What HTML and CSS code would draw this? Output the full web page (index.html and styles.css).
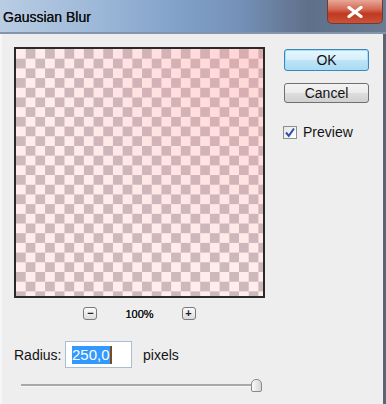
FILE: index.html
```html
<!DOCTYPE html>
<html lang="en">
<head>
    <meta charset="UTF-8">
    <title>Gaussian Blur</title>
    <link rel="stylesheet" href="styles.css">
</head>
<body>
    <div class="window">
        <div class="titlebar">
            <span class="title">Gaussian Blur</span>
            <div class="close-btn">
                <svg width="18" height="12" viewBox="0 0 18 12">
                    <path d="M3 1.5 L15 10.5 M15 1.5 L3 10.5" stroke="#fff" stroke-width="3.2" stroke-linecap="round"/>
                </svg>
            </div>
        </div>

        <div class="content">
            <div class="left-col">
                <div class="preview"></div>

                <div class="zoom-row">
                    <div class="zoom-btn">&minus;</div>
                    <span class="zoom-value">100%</span>
                    <div class="zoom-btn">+</div>
                </div>

                <div class="radius-row">
                    <label class="radius-label">Radius:</label>
                    <div class="radius-input"><span class="selected">250,0</span><span class="caret"></span></div>
                    <span class="unit">pixels</span>
                </div>

                <div class="slider">
                    <div class="track"></div>
                    <div class="thumb"></div>
                </div>
            </div>

            <div class="right-col">
                <button class="btn btn-ok">OK</button>
                <button class="btn btn-cancel">Cancel</button>
                <div class="check-row">
                    <span class="checkbox">
                        <svg width="12" height="11" viewBox="0 0 12 11">
                            <path d="M2 5.5 L4.8 8.8 L10 1.5" fill="none" stroke="#2c4fa8" stroke-width="2"/>
                        </svg>
                    </span>
                    <span class="check-label">Preview</span>
                </div>
            </div>
        </div>
    </div>
</body>
</html>
```

FILE: styles.css
```css
body {
    margin: 0;
    font-family: "Liberation Sans", Arial, sans-serif;
    color: #141414;
    background-color: #eeeeee;
}

.window {
    width: 386px;
    height: 404px;
    display: flex;
    flex-direction: column;
    background-color: #eeeeee;
    box-sizing: border-box;
}

.titlebar {
    height: 34px;
    flex-shrink: 0;
    display: flex;
    justify-content: space-between;
    align-items: flex-start;
    background: linear-gradient(to right, #b9cde3 0%, #9db8d8 25%, #7f9fc8 48%, #7591b8 62%, #5f708a 80%, #6a7b94 100%);
    border-bottom: 2px solid #8595aa;
    box-sizing: border-box;
}

.title {
    font-size: 14px;
    color: #111;
    margin: 9px 0 0 3px;
    text-shadow: 0 0 0.4px #111;
}

.close-btn {
    width: 56px;
    height: 24px;
    margin-right: 3px;
    box-sizing: border-box;
    border: 1px solid #6e3b36;
    border-top: none;
    border-radius: 0 0 5px 5px;
    background: linear-gradient(to bottom, #e8a898 0%, #d46a55 40%, #c0391f 60%, #c9533b 100%);
    display: flex;
    align-items: center;
    justify-content: center;
}

.content {
    flex: 1;
    display: flex;
    gap: 19px;
    padding: 13px 0 0 14px;
    border-right: 3px solid #5c6470;
    border-left: 2px solid #f6f6f6;
}

.left-col {
    width: 251px;
    display: flex;
    flex-direction: column;
    margin-left: -2px;
}

.preview {
    width: 251px;
    height: 251px;
    box-sizing: border-box;
    border: 2px solid #2a2a2a;
    background-color: #ffeded;
    background-image:
        radial-gradient(circle at 100% 0%, rgba(255, 140, 140, 0.26), rgba(255, 140, 140, 0) 65%),
        conic-gradient(#cdb8bc 0 25%, transparent 0 50%, #cdb8bc 0 75%, transparent 0);
    background-size: 100% 100%, 19.4px 19.4px;
    background-position: 0 0, 0 0;
}

.zoom-row {
    display: flex;
    justify-content: center;
    align-items: center;
    gap: 28px;
    margin-top: 9px;
    height: 13px;
}

.zoom-btn {
    width: 14px;
    height: 13px;
    box-sizing: border-box;
    border: 1px solid #7a7a7a;
    border-radius: 3px;
    background: linear-gradient(to bottom, #fbfbfb, #dcdcdc);
    font-size: 11px;
    font-weight: bold;
    line-height: 11px;
    text-align: center;
    color: #222;
}

.zoom-value {
    font-size: 11px;
    color: #141414;
    text-shadow: 0 0 0.4px #141414;
}

.radius-row {
    display: flex;
    align-items: center;
    margin-top: 21px;
    height: 27px;
}

.radius-label {
    font-size: 14px;
    width: 51px;
}

.radius-input {
    width: 67px;
    height: 27px;
    box-sizing: border-box;
    border: 1px solid #a9bdd3;
    background-color: #ffffff;
    padding-left: 6px;
    display: flex;
    align-items: center;
    font-size: 15px;
}

.selected {
    background-color: #3399ff;
    color: #ffffff;
    line-height: 18px;
}

.caret {
    width: 2px;
    height: 18px;
    background-color: #7a4a20;
}

.unit {
    font-size: 14px;
    margin-left: 11px;
}

.slider {
    position: relative;
    margin-top: 11px;
    height: 13px;
    width: 251px;
}

.track {
    position: absolute;
    left: 7px;
    right: 4px;
    top: 5px;
    height: 2px;
    background-color: #a8a8a8;
    border-bottom: 1px solid #f8f8f8;
}

.thumb {
    position: absolute;
    left: 237px;
    top: 0;
    width: 11px;
    height: 13px;
    box-sizing: border-box;
    border: 1px solid #8a8a8a;
    border-radius: 5px 5px 2px 2px;
    background: linear-gradient(to right, #fafafa, #d6d6d6);
}

.right-col {
    width: 85px;
    display: flex;
    flex-direction: column;
    padding-top: 2px;
}

.btn {
    width: 85px;
    font-family: "Liberation Sans", Arial, sans-serif;
    font-size: 14px;
    color: #111;
    border-radius: 3px;
    padding: 0;
    cursor: pointer;
}

.btn-ok {
    height: 22px;
    border: 1px solid #3b87c0;
    background: linear-gradient(to bottom, #e8f6fd 0%, #d6effb 48%, #bfe4f7 52%, #a9daf3 100%);
    box-shadow: inset 0 0 0 1px #9fe0fb;
}

.btn-cancel {
    height: 20px;
    margin-top: 12px;
    border: 1px solid #707070;
    background: linear-gradient(to bottom, #f4f4f4 0%, #ebebeb 48%, #dddddd 52%, #d0d0d0 100%);
}

.check-row {
    display: flex;
    align-items: center;
    margin-top: 21px;
    margin-left: -1px;
}

.checkbox {
    width: 14px;
    height: 13px;
    box-sizing: border-box;
    border: 1px solid #8e8f8f;
    background: linear-gradient(to bottom right, #e6e6e6, #ffffff);
    display: flex;
    align-items: center;
    justify-content: center;
}

.check-label {
    font-size: 14px;
    margin-left: 6px;
}
```
